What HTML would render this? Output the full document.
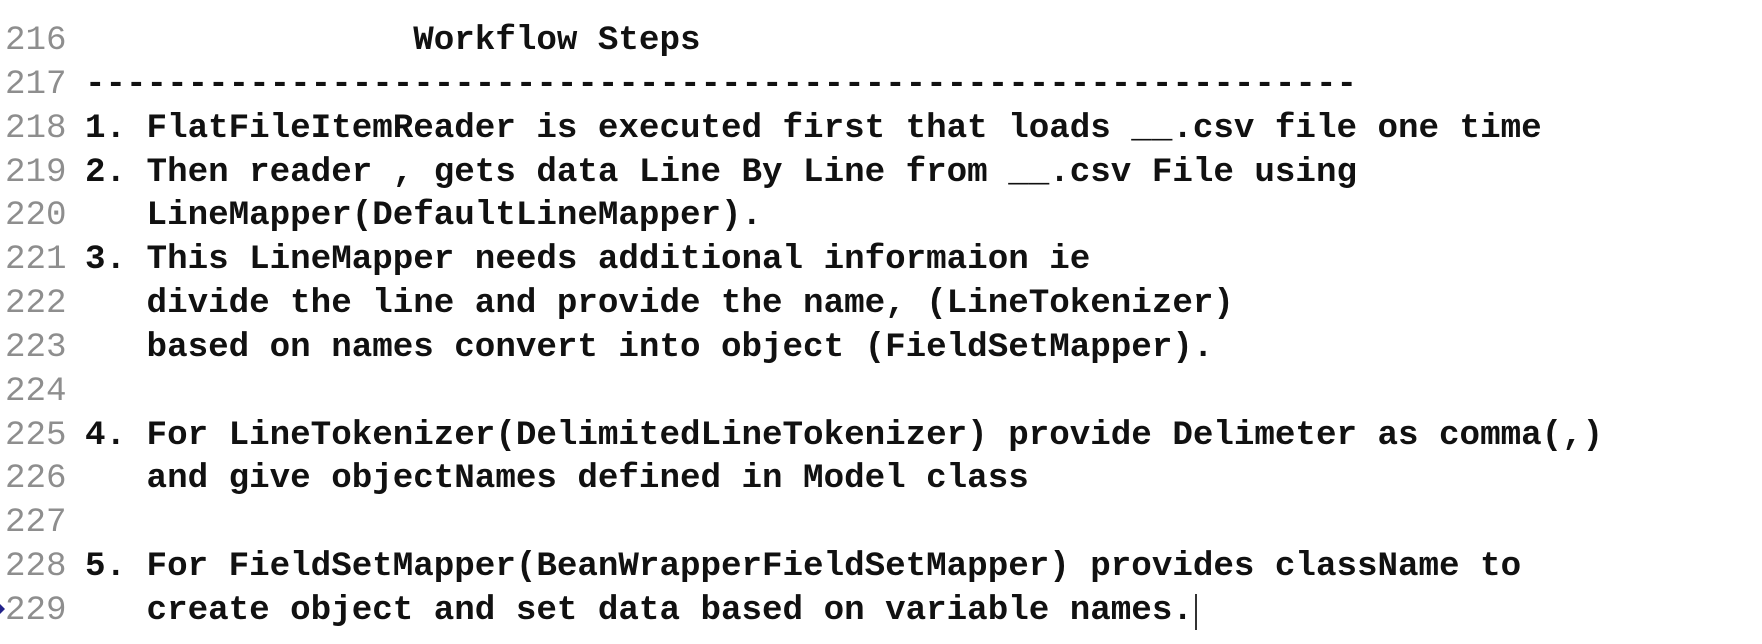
<!DOCTYPE html>
<html><head><meta charset="utf-8"><style>
html,body{margin:0;padding:0;background:#fff;width:1762px;height:644px;overflow:hidden;position:relative}
.r{position:absolute;left:0;height:44px;line-height:44px;white-space:pre;font-family:"Liberation Mono",monospace;font-size:34.2px}
.n{position:absolute;left:5px;color:#8e8e8e;font-weight:normal}
.t{position:absolute;left:85px;color:#111;font-weight:bold}
.cur{position:absolute;left:1195px;top:594px;width:2px;height:36px;background:#333}
</style></head><body>
<div class="r" style="top:0;height:19px;overflow:hidden"><div style="position:absolute;left:0;top:-25px;width:1762px;height:44px"><span class="n">215</span><span class="t" style="color:#777">--------------------------------------------------------------</span></div></div>
<div class="r" style="top:19px"><span class="n">216</span><span class="t">                Workflow Steps</span></div>
<div class="r" style="top:63px"><span class="n">217</span><span class="t">--------------------------------------------------------------</span></div>
<div class="r" style="top:107px"><span class="n">218</span><span class="t">1. FlatFileItemReader is executed first that loads __.csv file one time</span></div>
<div class="r" style="top:151px"><span class="n">219</span><span class="t">2. Then reader , gets data Line By Line from __.csv File using</span></div>
<div class="r" style="top:194px"><span class="n">220</span><span class="t">   LineMapper(DefaultLineMapper).</span></div>
<div class="r" style="top:238px"><span class="n">221</span><span class="t">3. This LineMapper needs additional informaion ie</span></div>
<div class="r" style="top:282px"><span class="n">222</span><span class="t">   divide the line and provide the name, (LineTokenizer)</span></div>
<div class="r" style="top:326px"><span class="n">223</span><span class="t">   based on names convert into object (FieldSetMapper).</span></div>
<div class="r" style="top:370px"><span class="n">224</span></div>
<div class="r" style="top:414px"><span class="n">225</span><span class="t">4. For LineTokenizer(DelimitedLineTokenizer) provide Delimeter as comma(,)</span></div>
<div class="r" style="top:457px"><span class="n">226</span><span class="t">   and give objectNames defined in Model class</span></div>
<div class="r" style="top:501px"><span class="n">227</span></div>
<div class="r" style="top:545px"><span class="n">228</span><span class="t">5. For FieldSetMapper(BeanWrapperFieldSetMapper) provides className to</span></div>
<div class="r" style="top:589px"><span class="n">229</span><span class="t">   create object and set data based on variable names.</span></div>
<div class="r" style="top:633px;height:11px;overflow:hidden"><span class="n">230</span></div>
<div style="position:absolute;left:0;top:604px;width:0;height:0;border-top:5px solid transparent;border-bottom:5px solid transparent;border-left:5px solid #22228a"></div>
<div class="cur"></div>
</body></html>
